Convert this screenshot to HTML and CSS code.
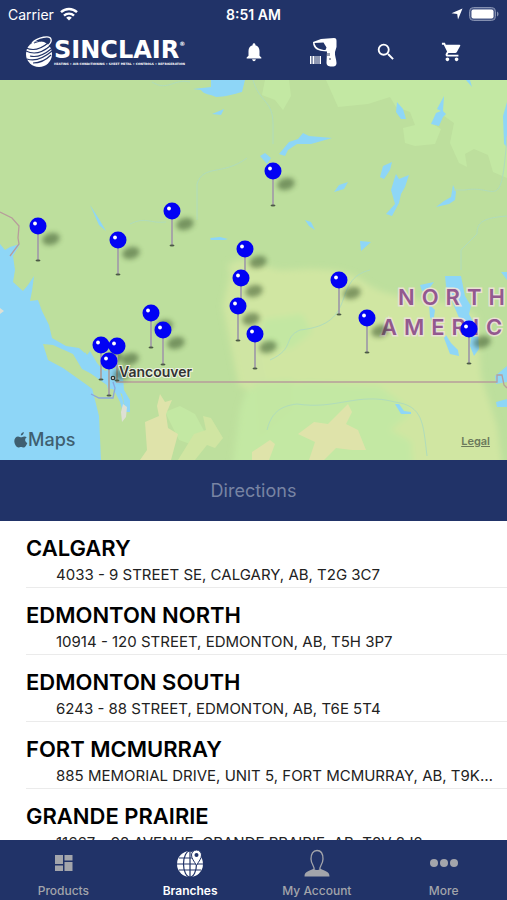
FILE: index.html
```html
<!DOCTYPE html>
<html lang="en">
<head>
    <meta charset="UTF-8">
    <meta name="viewport" content="width=device-width, initial-scale=1.0">
    <title>Sinclair - Branches</title>
    <link rel="stylesheet" href="styles.css">
</head>
<body>
    <div class="app">
        <header class="header">
            <div class="status-bar">
                <div class="status-left">
                    <span>Carrier</span>
                    <svg width="18" height="14" viewBox="0 0 18 14" fill="none" stroke="#fff" stroke-width="2.4">
                        <path d="M1 5.2a11.5 11.5 0 0 1 16 0"/>
                        <path d="M4 8.6a7.2 7.2 0 0 1 10 0"/>
                        <path d="M9 13.6L6.2 10.8a4 4 0 0 1 5.6 0z" fill="#fff" stroke="none"/>
                    </svg>
                </div>
                <time class="status-time">8:51 AM</time>
                <div class="status-right">
                    <svg width="12" height="12" viewBox="0 0 12 12" fill="#fff"><path d="M11.5 .5L7 11.5 6.2 6 .5 5.2z"/></svg>
                    <svg width="30" height="14" viewBox="0 0 30 14">
                        <rect x=".5" y=".5" width="26" height="13" rx="4" fill="#4a5a89" stroke="#8490b0"/>
                        <rect x="2.5" y="2.5" width="22" height="9" rx="2" fill="#fff"/>
                        <path d="M28 4.5c2 .8 2 4.2 0 5z" fill="#8490b0"/>
                    </svg>
                </div>
            </div>
            <div class="nav-bar">
                <a href="#" class="logo" aria-label="Sinclair">
                    <svg width="30" height="34" viewBox="0 0 30 34">
                        <circle cx="15" cy="19" r="13" fill="#fff"/>
                        <g fill="none" stroke="#213368" stroke-width="1.1">
                            <path d="M2 13c7 3 15 1 22-5"/>
                            <path d="M2 16c8 4 17 1 24-5"/>
                            <path d="M6 21c8 2 15-2 21-7"/>
                            <path d="M3 24c9 3 18-2 25-8"/>
                            <path d="M9 28c7 0 14-4 18-8"/>
                        </g>
                        <path d="M8 8C14 2 26 0 27 4c1 3-2 6-5 8" fill="none" stroke="#fff" stroke-width="1.3"/>
                        <path d="M10 8c5-2 11-3 14-1" fill="none" stroke="#213368"/>
                    </svg>
                    <span class="logo-text">
                        <span class="logo-name">SINCLAIR<sup>®</sup></span>
                        <span class="logo-tagline">HEATING • AIR CONDITIONING • SHEET METAL • CONTROLS • REFRIGERATION</span>
                    </span>
                </a>
                <div class="nav-icons">
                    <button type="button" aria-label="Notifications">
                        <svg width="22" height="22" viewBox="0 0 24 24" fill="#fff"><path d="M12 22c1.1 0 2-.9 2-2h-4c0 1.1.9 2 2 2zm6-6v-5c0-3.07-1.64-5.64-4.5-6.32V4c0-.83-.67-1.5-1.5-1.5s-1.5.67-1.5 1.5v.68C7.63 5.36 6 7.92 6 11v5l-2 2v1h16v-1l-2-2z"/></svg>
                    </button>
                    <button type="button" aria-label="Scan barcode">
                        <svg width="40" height="30" viewBox="0 0 40 30">
                            <path d="M13 5L21 2l13-1c2 0 2.5 1 2.5 3v6L35 15c-.5 4 1.5 7 1.5 11 0 3-2 3.5-5 3.5s-5-1-5-4l.5-11-5-.5C18 13.5 13 12 13 5z" fill="#fff"/>
                            <path d="M14.5 6l9-.5 3 5-1 2.5c-5 0-10-2-11-7z" fill="#213368"/>
                            <path d="M27 16h3v3h-3zM29 21h2v2h-2z" fill="#9a9fae"/>
                            <path d="M10 19h1.5v8H10zM12.5 19h2v8h-2zM15.5 19h1v8h-1zM17.5 19h1v8h-1zM19.5 19H21v8h-1.5z" fill="#fff"/>
                        </svg>
                    </button>
                    <button type="button" aria-label="Search">
                        <svg width="22" height="22" viewBox="0 0 24 24" fill="#fff"><path d="M15.5 14h-.79l-.28-.27A6.47 6.47 0 0 0 16 9.5 6.5 6.5 0 1 0 9.5 16c1.61 0 3.09-.59 4.23-1.57l.27.28v.79l5 4.99L20.49 19l-4.99-5zm-6 0C7.01 14 5 11.99 5 9.5S7.01 5 9.5 5 14 7.01 14 9.5 11.99 14 9.5 14z"/></svg>
                    </button>
                    <button type="button" aria-label="Cart">
                        <svg width="22" height="22" viewBox="0 0 24 24" fill="#fff"><path d="M7 18c-1.1 0-1.99.9-1.99 2S5.9 22 7 22s2-.9 2-2-.9-2-2-2zM1 2v2h2l3.6 7.59-1.35 2.45c-.16.28-.25.61-.25.96 0 1.1.9 2 2 2h12v-2H7.42c-.14 0-.25-.11-.25-.25l.03-.12.9-1.63h7.45c.75 0 1.41-.41 1.75-1.03l3.58-6.49A1 1 0 0 0 20 4H5.21l-.94-2H1zm16 16c-1.1 0-1.99.9-1.99 2s.89 2 1.99 2 2-.9 2-2-.9-2-2-2z"/></svg>
                    </button>
                </div>
            </div>
        </header>

        <section class="map" aria-label="Branch map">
            <svg class="map-canvas" viewBox="0 0 507 380" preserveAspectRatio="xMidYMid slice">
                <defs>
                    <filter id="soft" x="-50%" y="-100%" width="200%" height="300%"><feGaussianBlur stdDeviation="2.5"/></filter>
                    <filter id="blend" x="-10%" y="-10%" width="120%" height="120%"><feGaussianBlur stdDeviation="3"/></filter>
                    <g id="pin">
                        <ellipse cx="13" cy="13" rx="9" ry="6" transform="rotate(-15 13 13)" fill="#2f4a22" opacity=".5" filter="url(#soft)"/>
                        <path d="M0 5v29" stroke="#a6a6a6" stroke-width="2"/>
                        <ellipse cx="0" cy="34.5" rx="2.5" ry="1" fill="#4c5a46"/>
                        <circle r="8.5" fill="#0202f4"/>
                        <circle cx="-3" cy="-2.5" r="1.9" fill="#fff"/>
                    </g>
                </defs>

                <rect width="507" height="380" fill="#bddf9d"/>

                <!-- terrain -->
                <g fill="#c3e8a3">
                    <path d="M326 0h181v98l-14-6-5-17-14-6-9 5 2 13-8-4-9-20 4-20-10-7-13 7 10 6-6 15-20 2-10-3-2-15 12-3-5-13-14-5-6-10-22 7-30 3z"/>
                    <path d="M265 0h24l2 16-8 14-8-10-13-5z"/>
                    <path d="M165 332l15-6 15 8 14 26-8 8-22-8z"/>
                </g>
                <g filter="url(#blend)">
                    <path d="M250 300l100-2 60 12 20 20 6 60H232l8-60z" fill="#c3e8a3"/>
                    <path d="M233 182c20-8 34 10 54 8 36-2 60-2 80 14 20 14 60 16 86 20l24 12 4 60 16 50 6 44h-90l-4-62-30-22-72-4-42 8-26-4-12-60-4-20z" fill="#d0e6a2"/>
                    <path d="M228 184c24-8 16 30 28 58s4 50 16 60l-26 8c-14-50-10-80-18-126z" fill="#cfe5a3"/>
                    <path d="M262 240l40-6 10 18-20 16-28 4zM254 304l38-4 2 30-36 30z" fill="#c3e7a2"/>
                    <path d="M390 350l20-16 20 14-18 14z" fill="#d0e6a2"/>
                </g>
                <path d="M178 380l16-26 12-4-3-14 8 2 12 20-8 10-8-3-12 15z" fill="#d0e5a2"/>
                <g fill="#dfe3aa">
                    <path d="M160 314l5 8 7-2-6 14 2 14 10 6-7 26h-31l7-10-2-28 14-6-2-10z"/>
                    <path d="M298 354l16-12 14 2 20-20 4 8-6 12 12 6 8 20h-14l-16-2-12 12h-15l6-18z"/>
                    <path d="M252 372l18-12 5 4-6 16h-17z"/>
                </g>

                <!-- water -->
                <g fill="#8ed6f7">
                    <path d="M0 164l5 6 5-3 10-3-7 12 2 14-2 12 10 9 5-6 6-9-2 15-2 10 8-1 4 11 7 14 3 13 14 8 13 2 8 7 3-4 7 12 7 8 13-3 6 10 1 12 6 10v12l-4 0-4-18-8-5-22-1 7 28 2 44H0z"/>
                    <path d="M193 9l18-2V0h34l-3 12c-8 2-17 5-26 5-6-3-12-2-15-7zM212 34l12-5-3 6zM210 158l10-1 8 2-4 1h-13zM90 125l9 14 7 12-7-6z"/>
                    <path d="M279 74l10-12 9-3 5-6 6 3 23 2-21 6-14 0-9 6-3 6zM260 76l5-3 6 5-4 6zM334 112l5-7 9-3-4 7zM305 140l6 2 4 8-6-4zM360 161l11 1-10 9z"/>
                    <path d="M380 97l3-11 9-4-2 8-6 9zM391 110l3-10 2-6 3 5 10-4-4 12-4 7-2 9-7 13-6-2 9-10zM436 127l8-6 7-4 2-12 3 7-1 8-6 4zM397 22l6 7 3 10-5 0-5-7zM444 16l-7 13 4 2-5 2-5 11 8 2 4-9 3-3-3-3zM466 0h4l2 7zM507 22l-4 14 1 28 3 3z"/>
                    <path d="M445 196l16 0 4 20 6 10-2 8 9 17 1 18-5 7-4-10 2-18-12-8-6-14-8-20zM420 205l14-3-6 8-6 1zM429 224l6 6-2 14-3-7zM446 255l5 8 7 7 1 6-9-2-6-16zM501 192h6v8zM495 296l12-10v16l-11 2zM496 322l11-3v8l-10 0zM395 324l4 0 5 7 7 1v2l-10 0z"/>
                </g>
                <path d="M43 264l10 1 20 9 9 15 24 12 2 9-9 4-12-9-24-17-15-8z" fill="#bddf9d"/>
                <path d="M85 272l6 9 13 9 11 8 7 20 4 12-2 6-4-14-6-12-10-7-18-13-3-10z" fill="#8ed6f7"/>
                <path d="M17 199l8 8-7-3z" fill="#bddf9d"/>
                <path d="M123 324l4 3-1 10-4 5-1-10zM0 228l4 3-4 3z" fill="#dde0d5"/>
                <g fill="none" stroke="#b0dcbb" stroke-width="1">
                    <path d="M253 0c6 22 20 20 20 44v20M197 140v-36c6-20 26-8 50-26M130 144c16-8 20 0 36-2M152 2c16 10 22-4 38 0"/>
                    <path d="M507 56c-6 80-10 48-42 54h-12M507 136c-24 2-30 6-30 18l-16 16v20M267 350c4-16 12-24 30-26 40 6 60-12 98-2 28 4 28 20 32 54M270 280c26-12 12-22 30-30 60-6 30-50 70-60"/>
                </g>

                <!-- borders -->
                <g fill="none" stroke="#b79d9b" stroke-width="1.3">
                    <path d="M0 132l12 6 7 8-1 12 1 6-9 12"/>
                    <path d="M116 302h381v-7h5l2 10 3 3"/>
                    <path d="M91 314l8 4 14 0 2-10-2-6" stroke="#8ba6dc"/>
                </g>

                <g class="region-label">
                    <text x="398" y="225">NORTH</text>
                    <text x="381" y="255">AMERICA</text>
                </g>
                <circle cx="113" cy="298" r="1.7" fill="#fff" stroke="#333" stroke-width="1.3"/>

                <use href="#pin" x="273" y="91"/>
                <use href="#pin" x="172" y="131"/>
                <use href="#pin" x="38" y="146"/>
                <use href="#pin" x="118" y="160"/>
                <use href="#pin" x="245" y="169"/>
                <use href="#pin" x="241" y="198"/>
                <use href="#pin" x="339" y="200"/>
                <use href="#pin" x="238" y="226"/>
                <use href="#pin" x="151" y="233"/>
                <use href="#pin" x="367" y="238"/>
                <use href="#pin" x="469" y="249"/>
                <use href="#pin" x="163" y="250"/>
                <use href="#pin" x="255" y="254"/>
                <use href="#pin" x="101" y="265"/>
                <use href="#pin" x="117" y="266"/>
                <use href="#pin" x="109" y="281"/>
                <text class="city-label" x="119" y="297">Vancouver</text>
            </svg>
            <div class="map-brand">
                <svg width="14" height="16" viewBox="0 0 14 16" fill="#3f5f70"><path d="M9.8 0c.2 1.8-1.3 3.5-3 3.5C6.6 1.8 8.2.2 9.8 0zM12.7 5.3c-2.3 1.5-1.9 4.6.6 5.6-.7 2-2.1 4.6-3.7 4.6-1 0-1.4-.6-2.6-.6s-1.6.6-2.6.6C2.3 15.5.3 12 .3 9.1c0-3 1.9-4.7 3.8-4.7 1.2 0 2.2.8 3 .8.7 0 1.9-.9 3.3-.8 1 0 1.8.4 2.3.9z"/></svg>
                <span>Maps</span>
            </div>
            <a href="#" class="map-legal">Legal</a>
        </section>

        <button type="button" class="directions" disabled>Directions</button>

        <ul class="branches">
            <li>
                <h2>CALGARY</h2>
                <p>4033 - 9 STREET SE, CALGARY, AB, T2G 3C7</p>
            </li>
            <li>
                <h2>EDMONTON NORTH</h2>
                <p>10914 - 120 STREET, EDMONTON, AB, T5H 3P7</p>
            </li>
            <li>
                <h2>EDMONTON SOUTH</h2>
                <p>6243 - 88 STREET, EDMONTON, AB, T6E 5T4</p>
            </li>
            <li>
                <h2>FORT MCMURRAY</h2>
                <p>885 MEMORIAL DRIVE, UNIT 5, FORT MCMURRAY, AB, T9K 1R4</p>
            </li>
            <li>
                <h2>GRANDE PRAIRIE</h2>
                <p>11667 - 98 AVENUE, GRANDE PRAIRIE, AB, T8V 8J2</p>
            </li>
        </ul>

        <nav class="tab-bar">
            <a href="#">
                <svg width="28" height="28" viewBox="0 0 28 28" fill="currentColor"><path d="M6 6h8v9H6zM15.5 6h8v5.5h-8zM6 16.5h8V22H6zM15.5 13h8v9h-8z"/></svg>
                <span>Products</span>
            </a>
            <a href="#" class="active" aria-current="page">
                <svg width="28" height="28" viewBox="0 0 28 28">
                    <circle cx="14" cy="15" r="13" fill="#fff"/>
                    <g fill="none" stroke="#213368" stroke-width="1.2">
                        <ellipse cx="14" cy="15" rx="6.5" ry="13"/>
                        <path d="M14 2v26M1 15h26M3 9h22M3 21h22"/>
                    </g>
                    <path d="M20.5 16.5C18 12 15.5 9.5 15.5 6a5 5 0 0 1 10 0c0 3.5-2.5 6-5 10.5z" fill="#fff" stroke="#213368"/>
                    <circle cx="20.5" cy="6" r="2" fill="#213368"/>
                </svg>
                <span>Branches</span>
            </a>
            <a href="#">
                <svg width="28" height="28" viewBox="0 0 28 28">
                    <path d="M11 20c1-2-3-5-3-10 0-5 2-8.500 6-8.500s6 3.500 6 8.500c0 5-4 8-3 10" fill="none" stroke="currentColor" stroke-width="1.3"/>
                    <path d="M1.5 27.5c0-5 4-5 9.500-8 1 2 5 2 6 0 5.500 3 9.500 3 9.500 8z" fill="currentColor"/>
                </svg>
                <span>My Account</span>
            </a>
            <a href="#">
                <svg width="28" height="28" viewBox="0 0 28 28" fill="currentColor"><circle cx="4" cy="14" r="4"/><circle cx="14" cy="14" r="4"/><circle cx="24" cy="14" r="4"/></svg>
                <span>More</span>
            </a>
        </nav>
    </div>
</body>
</html>
```
FILE: styles.css
```css
* {
    margin: 0;
    padding: 0;
    box-sizing: border-box;
}

body {
    font-family: Inter, Roboto, sans-serif;
    background: #fff;
    color: #000;
}

svg {
    display: block;
    flex-shrink: 0;
}

button {
    font: inherit;
    border: none;
    background: none;
    cursor: pointer;
}

.app {
    display: flex;
    flex-direction: column;
    height: 100vh;
}

/* Header */
.header {
    flex-shrink: 0;
    background: #213368;
    color: #fff;
}

.status-bar {
    display: grid;
    grid-template-columns: 1fr auto 1fr;
    align-items: center;
    height: 28px;
    padding: 0 8px;
    font-size: 14px;
}

.status-left,
.status-right {
    display: flex;
    align-items: center;
    gap: 6px;
}

.status-right {
    justify-content: flex-end;
}

.status-time {
    font-weight: 600;
}

.nav-bar {
    display: flex;
    align-items: center;
    justify-content: space-between;
    height: 52px;
    padding: 0 22px 4px 24px;
}

.logo {
    display: flex;
    align-items: center;
    color: #fff;
    text-decoration: none;
}

.logo-text {
    display: flex;
    flex-direction: column;
}

.logo-name {
    font-family: "DejaVu Sans", sans-serif;
    font-size: 24px;
    font-weight: 700;
    line-height: 24px;
}

.logo-name sup {
    font-size: 6px;
    line-height: 6px;
    vertical-align: 12px;
}

.logo-tagline {
    font-family: "DejaVu Sans", sans-serif;
    font-size: 3px;
    font-weight: 700;
    line-height: 4px;
}

.nav-icons {
    display: flex;
}

.nav-icons button {
    display: flex;
    align-items: center;
    justify-content: center;
    width: 66px;
    height: 44px;
}

/* Map */
.map {
    position: relative;
    flex-shrink: 0;
    height: 380px;
    overflow: hidden;
}

.map-canvas {
    width: 100%;
    height: 100%;
}

.region-label {
    font-size: 22px;
    font-weight: 600;
    letter-spacing: 7px;
    fill: #93598f;
    stroke: #e9e2d4;
    stroke-width: 3px;
    paint-order: stroke;
}

.city-label {
    font-size: 14px;
    font-weight: 600;
    fill: #333;
    stroke: #eef3e4;
    stroke-width: 2px;
    paint-order: stroke;
}

.map-brand {
    position: absolute;
    left: 14px;
    bottom: 8px;
    display: flex;
    align-items: center;
    color: #3f5f70;
    font-size: 18px;
    font-weight: 500;
    line-height: 24px;
}

.map-legal {
    position: absolute;
    right: 17px;
    bottom: 12px;
    color: #6c7a5b;
    font-size: 11px;
    font-weight: 600;
}

/* Directions */
.directions {
    flex-shrink: 0;
    height: 61px;
    background: #213368;
    color: #7884a3;
    font-size: 18px;
}

/* Branch list */
.branches {
    flex: 1;
    min-height: 0;
    overflow-y: auto;
    scrollbar-width: none;
    list-style: none;
}

.branches li {
    margin-left: 26px;
    padding: 12px 12px 0 0;
    border-bottom: 1px solid #ebebeb;
}

.branches h2 {
    font-size: 22px;
    font-weight: 600;
    line-height: 30px;
}

.branches p {
    padding-left: 30px;
    color: #222;
    font-size: 15px;
    line-height: 24px;
    white-space: nowrap;
    overflow: hidden;
    text-overflow: ellipsis;
}

/* Tab bar */
.tab-bar {
    display: grid;
    grid-template-columns: repeat(4, 1fr);
    flex-shrink: 0;
    height: 60px;
    background: #213368;
}

.tab-bar a {
    display: flex;
    flex-direction: column;
    align-items: center;
    gap: 6px;
    padding-top: 9px;
    color: #a3a5ab;
    font-size: 12px;
    font-weight: 500;
    line-height: 16px;
    text-decoration: none;
}

.tab-bar .active {
    color: #fff;
    font-weight: 600;
}
```
